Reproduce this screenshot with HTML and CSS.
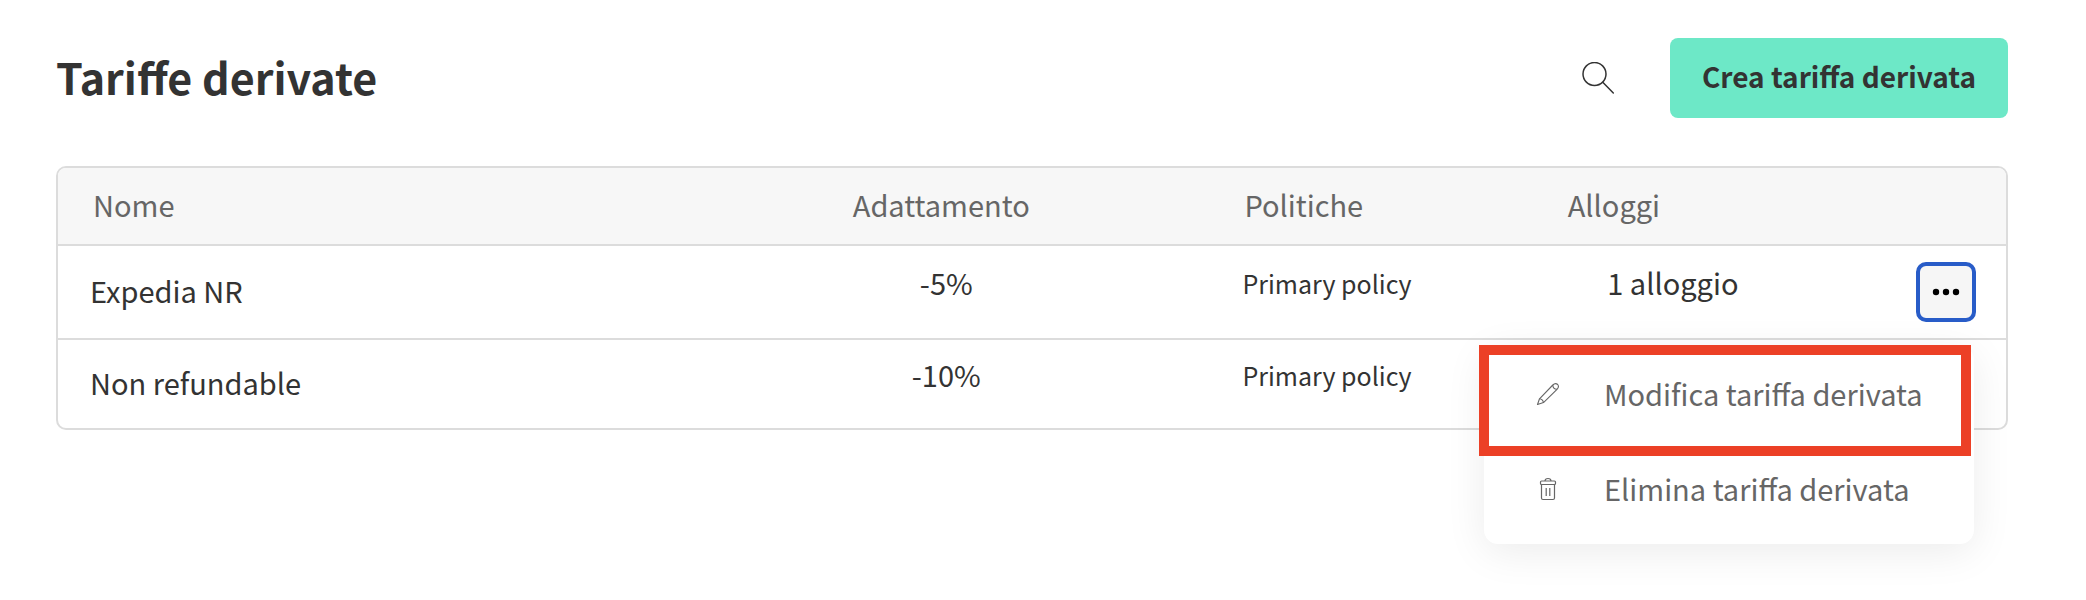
FILE: index.html
```html
<!DOCTYPE html>
<html lang="it">
<head>
<meta charset="utf-8">
<title>Tariffe derivate</title>
<link rel="stylesheet" href="styles.css">
</head>
<body>
<main class="page">
  <header class="page-header">
    <h1 class="title">Tariffe derivate</h1>
    <div class="actions">
      <button class="search" type="button" aria-label="Cerca">
        <svg width="32" height="32" viewBox="0 0 32 32" fill="none" stroke="#333" stroke-width="1.5" stroke-linecap="round"><circle cx="12.5" cy="12" r="11.5"/><path d="M21 20.500L31.300 31"/></svg>
      </button>
      <button class="create" type="button">Crea tariffa derivata</button>
    </div>
  </header>

  <table class="rates">
    <colgroup>
      <col class="col-name"><col class="col-adjust"><col class="col-policy"><col class="col-units"><col>
    </colgroup>
    <thead>
      <tr><th class="name">Nome</th><th class="adjust">Adattamento</th><th>Politiche</th><th>Alloggi</th><th></th></tr>
    </thead>
    <tbody>
      <tr class="first">
        <td class="name">Expedia NR</td>
        <td class="raised center">-5%</td>
        <td class="raised policy">Primary policy</td>
        <td class="raised center">1 alloggio</td>
        <td class="options">
          <div class="dropdown">
            <button class="more" type="button" aria-label="Opzioni" aria-expanded="true">
              <svg width="28" height="8" viewBox="0 0 28 8"><circle cx="4" cy="4" r="3.200"/><circle cx="14" cy="4" r="3.200"/><circle cx="24" cy="4" r="3.200"/></svg>
            </button>
            <div class="menu">
              <button class="item" type="button">
                <svg width="24" height="24" viewBox="0 0 24 24" fill="none" stroke="#666" stroke-width="1.100" stroke-linejoin="round"><path d="M1.500 22.500L3.500 16.800L16.800 3Q19.300 0.600 21.700 2.500Q23.500 4.800 21 7.300L7.500 20.600Z"/><path d="M16.800 3Q16.800 7.200 21 7.300M3.500 16.800Q6.800 17.200 7.500 20.600"/></svg>
                <span>Modifica tariffa derivata</span>
              </button>
              <button class="item" type="button">
                <svg width="24" height="24" viewBox="0 0 24 24" fill="none" stroke="#666" stroke-width="1.200" stroke-linejoin="round"><path d="M5.500 7.500V21Q5.500 22.500 7 22.500H17Q18.500 22.500 18.500 21V7.500"/><rect x="4.500" y="4" width="15" height="3.500" rx="1"/><path d="M9 4Q9 1.500 12 1.500T15 4"/><path d="M10.200 11V19M13.800 11V19"/></svg>
                <span>Elimina tariffa derivata</span>
              </button>
              <div class="highlight"></div>
            </div>
          </div>
        </td>
      </tr>
      <tr class="last">
        <td class="name">Non refundable</td>
        <td class="raised center">-10%</td>
        <td class="raised policy">Primary policy</td>
        <td></td>
        <td></td>
      </tr>
    </tbody>
  </table>
</main>
</body>
</html>
```
FILE: styles.css
```css
* { box-sizing: border-box; }
body {
  margin: 0;
  background: #fff;
  color: #333;
  font-family: "Noto Sans CJK SC", "Noto Sans", sans-serif;
  font-size: 29px;
  line-height: 40px;
}
button {
  margin: 0;
  padding: 0;
  border: 0;
  background: none;
  color: inherit;
  font: inherit;
  cursor: pointer;
}
svg { display: block; flex: none; }
.page { min-height: 100vh; padding: 38px 78px 38px 56px; }
.page-header {
  display: flex;
  align-items: center;
  justify-content: space-between;
  margin-bottom: 48px;
}
.title {
  margin: 0;
  padding-bottom: 4px;
  font-size: 43px;
  line-height: 60px;
  font-weight: 700;
}
.actions { display: flex; align-items: center; gap: 56px; }
.create {
  padding: 18px 32px 22px;
  border-radius: 8px;
  background: #6de8c7;
  font-size: 28px;
  font-weight: 700;
}
.rates {
  width: 100%;
  table-layout: fixed;
  border: 2px solid #dcdcdc;
  border-radius: 10px;
  border-collapse: separate;
  border-spacing: 0;
}
.col-name { width: 30.4%; }
.col-adjust { width: 30.4%; }
.col-policy { width: 16.6%; }
.col-units { width: 11%; }
.rates th {
  height: 76px;
  padding: 0 2px 4px;
  background: #f7f7f7;
  color: #666;
  font-weight: 400;
  text-align: left;
}
.rates th:first-child { border-top-left-radius: 8px; }
.rates th:last-child { border-top-right-radius: 8px; }
.rates th.name { padding-left: 35px; }
.rates th.adjust { padding-right: 12px; text-align: center; }
.rates td { padding: 0 0 4px; border-top: 2px solid #dcdcdc; }
.first td { height: 94px; }
.last td { height: 90px; }
.rates td.name { padding-left: 32px; }
.rates td.raised { padding-bottom: 20px; }
.rates td.policy { padding-bottom: 18px; font-size: 25px; }
.center { text-align: center; }
.rates td.options { padding: 0 30px 0 0; }
.dropdown { position: relative; width: 60px; margin-left: auto; }
.more {
  display: flex;
  align-items: center;
  justify-content: center;
  width: 60px;
  height: 60px;
  border: 4px solid #285cc8;
  border-radius: 10px;
  background: #f6f6f6;
}
.menu {
  position: absolute;
  top: 84px;
  right: 2px;
  width: 490px;
  padding-bottom: 8px;
  border-radius: 14px;
  background: #fff;
  box-shadow: 0 8px 40px rgba(0, 0, 0, 0.08);
}
.item {
  display: flex;
  align-items: center;
  gap: 44px;
  width: 100%;
  height: 95px;
  padding-left: 52px;
  color: #666;
  text-align: left;
  white-space: nowrap;
}
.item span { padding-bottom: 2px; }
.highlight {
  position: absolute;
  top: -1px;
  left: -5px;
  width: 492px;
  height: 111px;
  border: 10px solid #ec4026;
  pointer-events: none;
}
```
